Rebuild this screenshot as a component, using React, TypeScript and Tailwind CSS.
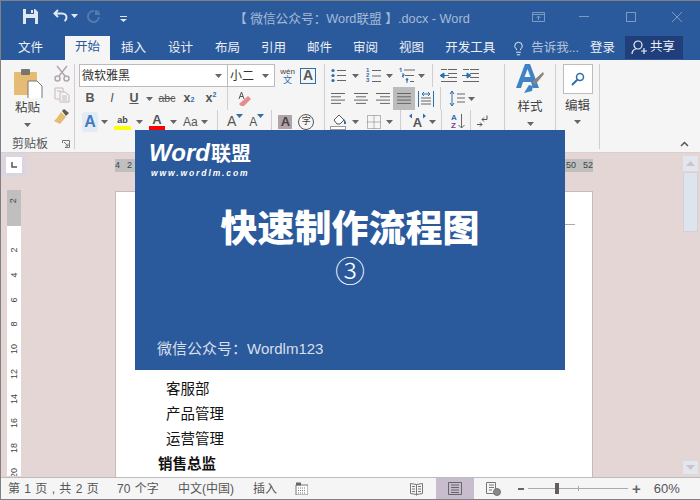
import { Lightbulb } from 'lucide-react'

const Caret = ({ className = '', color = '#666' }: { className?: string; color?: string }) => (
  <svg width="7" height="4" viewBox="0 0 7 4" className={`shrink-0 ${className}`}>
    <path d="M0 0h7L3.5 4z" fill={color} />
  </svg>
)

const Lines = ({ className = '', rows }: { className?: string; rows: number[][] }) => (
  <svg width="16" height="14" viewBox="0 0 16 14" className={`shrink-0 ${className}`} stroke="#666" strokeWidth="1">
    {rows.map(([a, b], i) => (
      <path key={i} d={`M${a} ${1.5 + i * 3.3}H${b}`} />
    ))}
  </svg>
)

function Bullets({ className = '' }: { className?: string }) {
  return (
    <svg width="16" height="15" viewBox="0 0 16 15" className={`shrink-0 ${className}`}>
      <path d="M6 2.5h9M6 7.5h9M6 12.5h9" stroke="#666" />
      <circle cx="2" cy="2.5" r="1.6" fill="#2f6ead" />
      <circle cx="2" cy="7.5" r="1.6" fill="#2f6ead" />
      <circle cx="2" cy="12.5" r="1.6" fill="#2f6ead" />
    </svg>
  )
}

function Numbered({ className = '' }: { className?: string }) {
  return (
    <div className={`relative w-[16px] h-[16px] shrink-0 ${className}`}>
      <div className="flex flex-col text-[6px] leading-[5.4px] font-bold text-[#2f6ead]">
        <span>1</span>
        <span>2</span>
        <span>3</span>
      </div>
      <svg width="16" height="16" viewBox="0 0 16 16" className="absolute inset-0">
        <path d="M6 2.5h9M6 8h9M6 13.5h9" stroke="#666" />
      </svg>
    </div>
  )
}

function Multilevel({ className = '' }: { className?: string }) {
  return (
    <svg width="17" height="17" viewBox="0 0 17 17" className={`shrink-0 ${className}`}>
      <path d="M5 3h11M6 8.5h9M11 14.5h4" stroke="#666" />
      <path d="M0.5 2l1.5-1" stroke="#2f6ead" />
      <path d="M2 1v4M3 7h2v1.5H3.5V10H5M8 12v4" stroke="#2f6ead" fill="none" />
      <circle cx="8" cy="12.5" r="1.3" fill="#2f6ead" />
    </svg>
  )
}

function IndentIcon({ flip = false, className = '' }: { flip?: boolean; className?: string }) {
  return (
    <svg width="17" height="13" viewBox="0 0 17 13" className={`shrink-0 ${className}`}>
      <path d="M8 .5h9M8 4.5h9M8 8.5h9M1 12.5h16M1 .5h6" stroke="#666" />
      <path
        d={flip ? 'M0 6.5h5V4l4 2.5L5 9V6.5' : 'M9 6.5H4V4L0 6.5 4 9V6.5'}
        fill="#2f6ead"
        stroke="#2f6ead"
      />
    </svg>
  )
}

function Vsep({ className = '' }: { className?: string }) {
  return <div className={`w-px bg-[#d4ccd4] self-stretch shrink-0 ${className}`} />
}

function Clipboard() {
  return (
    <div className="w-[74px] shrink-0 border-r border-[#d4ccd4] h-[85px] flex flex-col">
      <div className="flex h-[66px]">
        <div className="flex flex-col items-center w-[52px] pl-[1px]">
          <svg width="30" height="30" viewBox="0 0 30 30" className="mt-[4px]">
            <rect x="1" y="4" width="23" height="23" rx="1" fill="#e6bb73" />
            <rect x="8" y="1" width="9" height="6" rx="1" fill="#7a7471" />
            <path d="M15 13h9l5 5v13H15z" fill="#fff" stroke="#777" />
          </svg>
          <span className="text-[12.5px] leading-[18px] mt-[1px] text-[#444]">粘贴</span>
          <Caret className="mt-[6px]" />
        </div>
        <div className="flex flex-col items-center gap-[5px] mt-[1px]">
          <svg width="16" height="17" viewBox="0 0 16 17" fill="none" stroke="#b3a5b0" strokeWidth="1.5">
            <path d="M3 1l8 10M13 1L5 11" />
            <circle cx="3.5" cy="13.5" r="2.5" />
            <circle cx="12.5" cy="13.5" r="2.5" />
          </svg>
          <svg width="16" height="16" viewBox="0 0 16 16" fill="#f5f5f5" stroke="#c5b9c2">
            <path d="M1 1h8v11H1z" />
            <path d="M6 5h5l4 3v7H6z" />
            <path d="M8 9h5M8 11h5M8 13h5M3 4h4" />
          </svg>
          <svg width="17" height="17" viewBox="0 0 17 17">
            <path d="M11 1l5 4-3 3-4-5z" fill="#5d5a58" />
            <path d="M8 4l5 5-6 7-6-3 3-3z" fill="#e6bb73" />
          </svg>
        </div>
      </div>
      <div className="flex items-center mt-[9px] pl-[11px]">
        <span className="text-[12px] leading-[16px] text-[#555] w-[50px]">剪贴板</span>
        <svg width="8" height="8" viewBox="0 0 8 8" fill="none" stroke="#777">
          <path d="M.5 3V.5H7.500V7.500H3M2 2l4 4M6 3.500V6H3.500" />
        </svg>
      </div>
    </div>
  )
}

function FontGroup() {
  const slot = 'w-[22px] flex justify-center items-center shrink-0'
  return (
    <div className="w-[250px] shrink-0 border-r border-[#d4ccd4] h-[85px] flex flex-col">
      <div className="flex items-center h-[23px] pl-[4px]">
        <div className="w-[149px] h-[23px] border border-[#bcbcbc] bg-white flex items-center justify-between pl-[2px] pr-[5px]">
          <span className="text-[12px] text-[#333]">微软雅黑</span>
          <Caret />
        </div>
        <div className="w-[47px] h-[23px] border border-l-0 border-[#bcbcbc] bg-white flex items-center justify-between pl-[2px] pr-[5px]">
          <span className="text-[12px] text-[#333]">小二</span>
          <Caret />
        </div>
        <div className="ml-[4px] w-[17px] flex flex-col items-center leading-none">
          <span className="text-[8px] leading-[9px] text-[#444]">wén</span>
          <span className="text-[9px] leading-[9px] text-[#2f6ead]">文</span>
        </div>
        <div className="ml-[4px] w-[16px] h-[16px] border border-[#2f6ead] flex items-center justify-center text-[14px] font-bold text-[#555]">
          A
        </div>
      </div>
      <div className="flex items-center h-[23px] pl-[4px] text-[#555] text-[12.5px] font-bold">
        <span className={slot}>B</span>
        <span className={`${slot} italic font-normal`}>I</span>
        <span className={`${slot} underline`}>U</span>
        <Caret className="ml-[1px] mr-[3px]" />
        <span className={`${slot} text-[10.5px] font-normal line-through`}>abc</span>
        <span className={slot}>
          x<sub className="text-[7px] text-[#2f6ead]">2</sub>
        </span>
        <span className={slot}>
          x<sup className="text-[7px] text-[#2f6ead]">2</sup>
        </span>
        <Vsep className="ml-[5px]" />
        <svg width="15" height="16" viewBox="0 0 15 16" className="ml-[9px]">
          <path d="M2 13l9-8 3 3-7 7H4z" fill="#e88b90" />
          <path d="M2 8l2.500-7L7 8M3 5.500h3" stroke="#555" fill="none" />
        </svg>
      </div>
      <div className="flex items-center h-[23px] pl-[4px]">
        <span className="w-[16px] ml-[3px] text-center text-[16px] leading-[20px] font-bold text-[#3f7cc0] bg-[#e3ebf5] rounded-[3px]">A</span>
        <Caret className="ml-[3px]" />
        <div className="ml-[6px] w-[17px] flex flex-col items-center">
          <span className="text-[9px] leading-[12px] text-[#444] font-bold">ab</span>
          <div className="w-[17px] h-[4px] bg-[#ffff00]" />
        </div>
        <Caret className="ml-[5px]" />
        <div className="ml-[6px] w-[16px] flex flex-col items-center">
          <span className="text-[13px] leading-[13px] font-bold text-[#555]">A</span>
          <div className="w-[16px] h-[4px] bg-[#ff0000]" />
        </div>
        <Caret className="ml-[5px]" />
        <span className="ml-[6px] w-[16px] text-[12px] text-[#555]">Aa</span>
        <Caret className="ml-[2px]" />
        <Vsep className="ml-[9px]" />
        <span className="ml-[9px] text-[14px] text-[#555]">A</span>
        <Caret color="#2f6ead" className="-mt-[12px]" />
        <span className="ml-[6px] text-[12px] text-[#555]">A</span>
        <Caret color="#2f6ead" className="-mt-[12px]" />
        <Vsep className="ml-[7px]" />
        <span className="ml-[6px] w-[14px] h-[14px] bg-[#b0a3aa] flex items-center justify-center text-[13px] font-bold text-[#444]">A</span>
        <span className="ml-[6px] w-[16px] h-[16px] rounded-full border border-[#555] flex items-center justify-center text-[9px] text-[#444]">字</span>
      </div>
    </div>
  )
}

function ParagraphGroup() {
  return (
    <div className="w-[180px] shrink-0 border-r border-[#d4ccd4] h-[85px] flex flex-col">
      <div className="flex items-center h-[23px]">
        <Bullets className="ml-[6px]" />
        <Caret className="ml-[5px]" />
        <Numbered className="ml-[7px]" />
        <Caret className="ml-[4px]" />
        <Multilevel className="ml-[6px]" />
        <Caret className="ml-[2px]" />
        <Vsep className="ml-[7px]" />
        <IndentIcon className="ml-[7px]" />
        <IndentIcon flip className="ml-[5px]" />
      </div>
      <div className="flex items-center h-[23px]">
        <Lines className="ml-[6px]" rows={[[0, 14], [0, 10], [0, 14], [0, 10]]} />
        <Lines className="ml-[6px]" rows={[[1, 15], [3, 13], [1, 15], [3, 13]]} />
        <Lines className="ml-[6px]" rows={[[1, 15], [5, 15], [1, 15], [5, 15]]} />
        <div className="ml-[2px] w-[22px] h-[23px] bg-[#bcbcbc] flex items-center justify-center">
          <Lines rows={[[1, 15], [1, 15], [1, 15], [1, 15]]} />
        </div>
        <svg width="16" height="16" viewBox="0 0 16 16" className="ml-[3px] shrink-0">
          <path d="M.5 0v16M15.500 0v16M4 3h8M4 3l2-2M4 3l2 2M12 3l-2-2M12 3l-2 2" stroke="#2f6ead" fill="none" />
          <path d="M3 7h10M3 10h10M3 13h10" stroke="#666" />
        </svg>
        <Vsep className="ml-[6px]" />
        <svg width="16" height="17" viewBox="0 0 16 17" className="ml-[8px] shrink-0">
          <path d="M3 1v15M1 4l2-3 2 3M1 13l2 3 2-3" stroke="#2f6ead" fill="none" />
          <path d="M8 4h8M8 8h8M8 12h8" stroke="#666" />
        </svg>
        <Caret className="ml-[3px]" />
      </div>
      <div className="flex items-center h-[23px]">
        <svg width="17" height="17" viewBox="0 0 17 17" className="ml-[5px] shrink-0">
          <path d="M4 7l5-5 5 5-4 4H7z" fill="#fff" stroke="#555" />
          <path d="M14 6l2 3v2h-2z" fill="#2f6ead" />
          <rect x=".5" y="13.500" width="15" height="3" fill="#fff" stroke="#999" />
        </svg>
        <Caret className="ml-[5px]" />
        <svg width="14" height="14" viewBox="0 0 14 14" className="ml-[8px] shrink-0" fill="none" stroke="#777" strokeDasharray="1 1">
          <path d="M.5.500h13v13H.500zM7 .500v13M.500 7h13" />
        </svg>
        <Caret className="ml-[5px]" />
        <Vsep className="ml-[7px]" />
        <div className="ml-[7px] relative w-[19px] h-[18px] shrink-0 flex justify-center">
          <span className="text-[13px] leading-[20px] font-bold text-[#555]">A</span>
          <svg width="19" height="6" viewBox="0 0 19 6" className="absolute top-0 left-0">
            <path d="M1 3l3-2.500v5zM18 3l-3-2.500v5z" fill="#2f6ead" />
          </svg>
        </div>
        <Caret className="ml-[2px]" />
        <Vsep className="ml-[5px]" />
        <div className="ml-[9px] flex flex-col text-[8px] leading-[8px] font-bold w-[6px]">
          <span className="text-[#2f6ead]">A</span>
          <span className="text-[#7b3f98]">Z</span>
        </div>
        <svg width="7" height="15" viewBox="0 0 7 15" className="ml-[1px] shrink-0">
          <path d="M3.500 0v14M.500 11l3 3 3-3" stroke="#666" fill="none" />
        </svg>
        <Vsep className="ml-[5px]" />
        <svg width="11" height="13" viewBox="0 0 11 13" className="ml-[6px] shrink-0" fill="none">
          <path d="M10 .500v4H5M7 2.500l-2 2 2 2" stroke="#555" />
          <path d="M0 9.500h5M3 7.500l2 2-2 2" stroke="#555" />
        </svg>
      </div>
    </div>
  )
}

function StylesGroup() {
  return (
    <>
      <div className="w-[51px] shrink-0 border-r border-[#d4ccd4] h-[85px] flex flex-col items-center">
        <svg width="28" height="30" viewBox="0 0 28 30">
          <path d="M9 0h5l9 24h-6l-2-6H7l-2 6H0z" fill="#3f83c4" />
          <path d="M11.500 5l-3 8h6z" fill="#f5f5f5" />
          <path d="M27 8l1 2-9 11-3-3z" fill="#8a8583" />
          <path d="M13 21l4 1-1 5-8 2z" fill="#3f83c4" />
        </svg>
        <span className="text-[12.5px] leading-[18px] mt-[4px] text-[#444]">样式</span>
        <Caret className="mt-[6px]" />
      </div>
      <div className="w-[44px] shrink-0 border-r border-[#d4ccd4] h-[85px] flex flex-col items-center">
        <div className="w-[30px] h-[30px] bg-white border border-[#bcbcbc] flex items-center justify-center">
          <svg width="14" height="14" viewBox="0 0 14 14" fill="none" stroke="#2f6ead">
            <circle cx="9" cy="5" r="3.500" strokeWidth="1.500" />
            <path d="M6.500 7.500L1 13" strokeWidth="2" />
          </svg>
        </div>
        <span className="text-[12.5px] leading-[18px] mt-[3px] text-[#444]">编辑</span>
        <Caret className="mt-[5px]" />
      </div>
    </>
  )
}

function Ruler() {
  return (
    <div className="w-[26px] shrink-0 flex flex-col">
      <div className="w-[26px] h-[24px] bg-[#dcd5e0] flex items-center justify-center">
        <div className="w-[16px] h-[16px] bg-white flex items-center justify-center">
          <svg width="6" height="6" viewBox="0 0 6 6">
            <path d="M1 0v5h5" stroke="#555" strokeWidth="1.500" fill="none" />
          </svg>
        </div>
      </div>
      <div className="ml-[6px] mt-[13px] w-[14px] flex flex-col text-[9px] text-[#444]">
        <div className="h-[36px] bg-[#bfbfbf] flex items-center justify-center">
          <span className="-rotate-90 -translate-y-[7px]">2</span>
        </div>
        <div className="bg-white h-[250px] pt-[18px] flex flex-col items-center gap-[12.75px] overflow-hidden leading-[12px]">
          {[2, 4, 6, 8, 10, 12, 14, 16, 18, 20].map((n) => (
            <span key={n} className="-rotate-90 h-[12px]">{n}</span>
          ))}
        </div>
      </div>
    </div>
  )
}

export default function App() {
  return (
    <div className="relative w-[700px] h-[500px] overflow-hidden flex flex-col border-t border-l border-b border-[#808080] bg-[#f5f5f5] [font-family:'Liberation_Sans','Noto_Sans_CJK_SC',sans-serif]">
      <div className="h-[35px] bg-[#2b5a9c] flex items-center shrink-0 text-[#a6bad6] relative">
        <svg width="15" height="15" viewBox="0 0 15 15" className="ml-[22px] -mt-[5px]">
          <path d="M0 0h12l3 3v12H0z" fill="#dfe7f2" />
          <path d="M3 0h8v5H3zM3 9h9v6H3z" fill="#2b5a9c" />
          <path d="M8 1h2v3H8z" fill="#dfe7f2" />
        </svg>
        <svg width="15" height="13" viewBox="0 0 15 13" fill="none" stroke="#dfe7f2" strokeWidth="2" className="ml-[15px] -mt-[6px]">
          <path d="M5 1L1.500 4.500 5 8M2 4.500h7c3 0 4.500 2 4.500 4s-1 3-2 3.500" />
        </svg>
        <Caret color="#dfe7f2" className="ml-[3px] -mt-[6px]" />
        <svg width="14" height="14" viewBox="0 0 14 14" fill="none" stroke="#557aae" strokeWidth="2" className="ml-[9px] -mt-[5px]">
          <path d="M9 1v4h4M9 5l3-3M12 8a5.500 5.500 0 1 1-5-6" />
        </svg>
        <svg width="7" height="6" viewBox="0 0 7 6" className="ml-[19px]">
          <path d="M0 0h7v1H0zM0 3h7L3.500 6z" fill="#dfe7f2" />
        </svg>
        <span className="absolute left-[233px] top-[9px] text-[12.7px] leading-[18px] whitespace-nowrap">【 微信公众号：Word联盟 】.docx - Word</span>
        <div className="ml-auto flex items-center mr-[18px] -mt-[4px]">
          <svg width="13" height="10" viewBox="0 0 13 10" fill="none" stroke="#7d9ac2">
            <path d="M.5.500h12v9H.500zM.500 2.500h12M6.500 8V4M4.500 6l2-2 2 2" />
          </svg>
          <div className="ml-[34px] w-[10px] h-px bg-[#7d9ac2]" />
          <div className="ml-[37px] w-[10px] h-[10px] border border-[#7d9ac2]" />
          <svg width="10" height="10" viewBox="0 0 10 10" stroke="#7d9ac2" className="ml-[36px]">
            <path d="M0 0l10 10M10 0L0 10" />
          </svg>
        </div>
      </div>

      <div className="h-[24px] bg-[#2b5a9c] flex items-end shrink-0 text-[12.5px] text-[#edf1f7]">
        <span className="ml-[17px] leading-[22px] pb-[1px]">文件</span>
        <span className="ml-[22px] w-[45px] h-[24px] bg-[#f5f5f5] text-[#2b5a9c] text-center leading-[23px]">开始</span>
        <span className="ml-[11px] leading-[22px] pb-[1px]">插入</span>
        <span className="ml-[22px] leading-[22px] pb-[1px]">设计</span>
        <span className="ml-[22px] leading-[22px] pb-[1px]">布局</span>
        <span className="ml-[21px] leading-[22px] pb-[1px]">引用</span>
        <span className="ml-[21px] leading-[22px] pb-[1px]">邮件</span>
        <span className="ml-[21px] leading-[22px] pb-[1px]">审阅</span>
        <span className="ml-[21px] leading-[22px] pb-[1px]">视图</span>
        <span className="ml-[21px] leading-[22px] pb-[1px]">开发工具</span>
        <Lightbulb size={15} strokeWidth={1.5} className="ml-[16px] mb-[4px]" />
        <span className="ml-[5px] leading-[22px] pb-[1px] text-[#b3c4dc]">告诉我...</span>
        <span className="ml-[11px] leading-[22px] pb-[1px]">登录</span>
        <div className="ml-[10px] w-[58px] h-[23px] mb-px bg-[#1f3e7a] flex items-center pl-[6px] gap-[3px]">
          <svg width="16" height="15" viewBox="0 0 16 15" fill="none" stroke="#edf1f7" strokeWidth="1.200">
            <circle cx="7" cy="5" r="4" />
            <path d="M1 14c0-3 2-5 4-5M10 11h6M13 8v6" />
          </svg>
          <span>共享</span>
        </div>
      </div>

      <div className="h-[93px] shrink-0 bg-[#f5f5f5] flex pt-[4px] relative border-b border-[#d9d0d4]">
        <Clipboard />
        <FontGroup />
        <ParagraphGroup />
        <StylesGroup />
        <svg width="9" height="6" viewBox="0 0 9 6" fill="none" stroke="#555" strokeWidth="1.500" className="absolute right-[11px] bottom-[5px]">
          <path d="M1 5l3.500-3.500L8 5" />
        </svg>
      </div>

      <div className="flex-1 min-h-0 bg-[#e5d6d6] flex overflow-hidden">
        <Ruler />
        <div className="w-[88px] shrink-0" />
        <div className="w-[478px] shrink-0 flex flex-col">
          <div className="h-[13px] mt-[6px] flex justify-between text-[9px] leading-[13px] text-[#444] bg-[#bfbfbf]">
            <span className="flex gap-[7px]"><span>4</span><span>2</span></span>
            <span className="flex gap-[7px]"><span>50</span><span>52</span></span>
          </div>
          <div className="relative mt-[19px] flex-1 bg-white border border-[#c4bcbc] border-b-0 pt-[185px] pl-[42px] text-[14.5px] leading-[25px] text-[#111]">
            <div className="absolute left-[449px] top-[32px] w-[10px] h-px bg-[#aaa]" />
            <p className="pl-[8px]">客服部</p>
            <p className="pl-[8px]">产品管理</p>
            <p className="pl-[8px]">运营管理</p>
            <p className="font-bold">销售总监</p>
          </div>
        </div>
        <div className="w-[106px] shrink-0 flex justify-end pr-[1px] pt-[3px]">
          <div className="w-[15px] flex flex-col gap-[1px]">
            <div className="h-[15px] bg-[#e2e6ef] flex items-center justify-center">
              <svg width="9" height="5" viewBox="0 0 9 5"><path d="M0 5h9L4.500 0z" fill="#cfc3cb" /></svg>
            </div>
            <div className="h-[60px] bg-[#dde4ee] border border-[#d4d0d8]" />
            <div className="mt-auto mb-[3px] h-[13px] bg-[#e2e6ef] flex items-center justify-center">
              <svg width="9" height="5" viewBox="0 0 9 5"><path d="M0 0h9L4.500 5z" fill="#cfc3cb" /></svg>
            </div>
          </div>
        </div>
      </div>

      <div className="h-[22px] shrink-0 border-t border-[#bcbcbc] bg-[#f5f5f5] flex items-center text-[12px] text-[#555]">
        <span className="ml-[7px] w-[90px] whitespace-nowrap [word-spacing:1px]">第 1 页 , 共 2 页</span>
        <span className="ml-[19px] w-[43px] whitespace-nowrap [word-spacing:1px]">70 个字</span>
        <span className="ml-[18px] w-[57px] whitespace-nowrap">中文(中国)</span>
        <span className="ml-[18px] w-[24px]">插入</span>
        <svg width="13" height="13" viewBox="0 0 13 13" className="ml-[18px]">
          <path d="M1 3h12v10H1z" fill="#fff" stroke="#777" />
          <path d="M1 .5h5v3H1z" fill="#666" />
          <path d="M3 6h8M3 8.500h8M3 11h8" stroke="#777" strokeDasharray="1 1" />
        </svg>
        <svg width="14" height="14" viewBox="0 0 14 14" fill="none" stroke="#777" className="ml-[102px]">
          <path d="M.5 1.500l6 1 6-1v10l-6 1-6-1zM6.500 2.500v11M2 4.500h3M2 7h3M2 9.500h3M8 4.500h3M8 7h3M8 9.500h3" />
        </svg>
        <div className="ml-[12px] w-[38px] h-[22px] bg-[#c8bccf] flex items-center justify-center">
          <svg width="14" height="13" viewBox="0 0 14 13" fill="none" stroke="#666">
            <path d="M.5.500h13v12H.500zM3 3h8M3 5.500h8M3 8h8M3 10.500h8" />
          </svg>
        </div>
        <svg width="15" height="14" viewBox="0 0 15 14" fill="none" stroke="#777" className="ml-[12px]">
          <path d="M.5.500h9v11H.500zM3 3h5M3 5.500h5M3 8h3" />
          <circle cx="11" cy="10" r="3.500" fill="#888" />
        </svg>
        <div className="ml-[17px] w-[6px] h-[2px] bg-[#666]" />
        <div className="ml-[4px] w-[100px] h-[1px] bg-[#aaa] relative">
          <div className="absolute left-[27px] -top-[5px] w-[4px] h-[11px] bg-[#665c5c]" />
          <div className="absolute left-[50px] -top-[2px] w-px h-[5px] bg-[#aaa]" />
        </div>
        <span className="ml-[4px] text-[15px] leading-none font-bold text-[#666]">+</span>
        <span className="ml-[13px] text-[13px]">60%</span>
      </div>

      <div className="absolute left-[134px] top-[129px] w-[430px] h-[240px] bg-[#2b5a9c] text-white flex flex-col">
        <div className="ml-[14px] mt-[9px] flex items-baseline italic font-bold text-[24px] leading-[28px]">
          <span>Word</span>
          <span className="not-italic text-[20px] ml-[1px]">联盟</span>
        </div>
        <span className="ml-[16px] italic font-bold text-[8.5px] leading-[10px] tracking-[1.9px]">www.wordlm.com</span>
        <span className="mt-[30px] text-center text-[37px] leading-[44px] font-black whitespace-nowrap">快速制作流程图</span>
        <span className="text-center text-[30px] leading-[38px] mt-[1px] font-light">③</span>
        <span className="ml-[22px] mt-auto mb-[12px] text-[15px] leading-[18px] text-[#d7dfea]">微信公众号：Wordlm123</span>
      </div>
    </div>
  )
}
